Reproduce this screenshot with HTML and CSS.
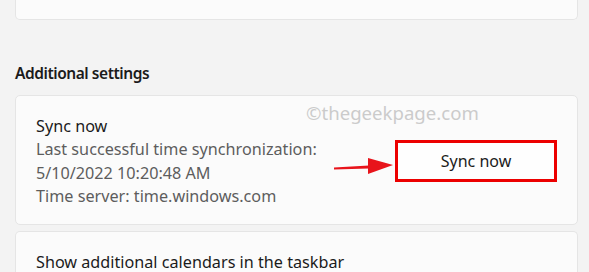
FILE: index.html
```html
<!DOCTYPE html>
<html>
<head>
<meta charset="utf-8">
<link rel="stylesheet" href="styles.css">
</head>
<body>
<div class="page">
  <div class="card card-top"></div>
  <h2 class="section-title">Additional settings</h2>
  <div class="card card-sync">
    <div class="sync-text">
      <div class="title">Sync now</div>
      <div class="sub">Last successful time synchronization:</div>
      <div class="sub">5/10/2022 10:20:48 AM</div>
      <div class="sub">Time server: time.windows.com</div>
    </div>
    <button class="sync-btn">Sync now</button>
    <div class="watermark">©thegeekpage.com</div>
    <svg class="arrow" width="64" height="20" viewBox="0 0 64 20">
      <path d="M1 11.5 L36 9.5 L36 12.5 L1 13.5 Z" fill="#e8141b"/>
      <path d="M35 2 L60 9 L35 18 Z" fill="#e8141b"/>
    </svg>
  </div>
  <div class="card card-cal">
    <div class="title">Show additional calendars in the taskbar</div>
  </div>
</div>
</body>
</html>
```
FILE: styles.css
```css
html, body {
  margin: 0;
  padding: 0;
  background: #f3f3f3;
  height: 272px;
  overflow: hidden;
}
.page {
  padding: 0 11px 0 15px;
  font-family: "Noto Sans", "Open Sans", sans-serif;
  color: #1b1b1b;
}
.card {
  background: #fbfbfb;
  border: 1px solid #e5e5e5;
  border-radius: 5px;
  box-sizing: border-box;
}
.card-top {
  height: 20px;
  border-top: none;
  border-top-left-radius: 0;
  border-top-right-radius: 0;
}
.section-title {
  margin: 0;
  padding-top: 42px;
  height: 75px;
  box-sizing: border-box;
  font-size: 15.5px;
  font-weight: 600;
  letter-spacing: -0.45px;
  line-height: 22px;
}
.card-sync {
  position: relative;
  height: 130px;
  display: flex;
  align-items: center;
  justify-content: space-between;
  padding: 0 20px 0 20px;
}
.sync-text {
  font-size: 16.2px;
  line-height: 23.5px;
  margin-top: 3px;
}
.title {
  color: #1b1b1b;
}
.sub {
  color: #5d5d5d;
}
.sync-btn {
  width: 162px;
  height: 42px;
  border: 3px solid #ec0000;
  background: #fefefe;
  font-family: inherit;
  font-size: 16px;
  color: #1b1b1b;
  padding: 0;
  margin-top: 2px;
}
.watermark {
  position: absolute;
  left: 290px;
  top: 4px;
  font-size: 18.6px;
  color: #cbcbcb;
}
.arrow {
  position: absolute;
  left: 317px;
  top: 60px;
}
.card-cal {
  margin-top: 6px;
  height: 41px;
  padding: 22px 20px 0 20px;
  font-size: 16.2px;
  line-height: 16px;
  border-bottom: none;
  border-bottom-left-radius: 0;
  border-bottom-right-radius: 0;
}
```
